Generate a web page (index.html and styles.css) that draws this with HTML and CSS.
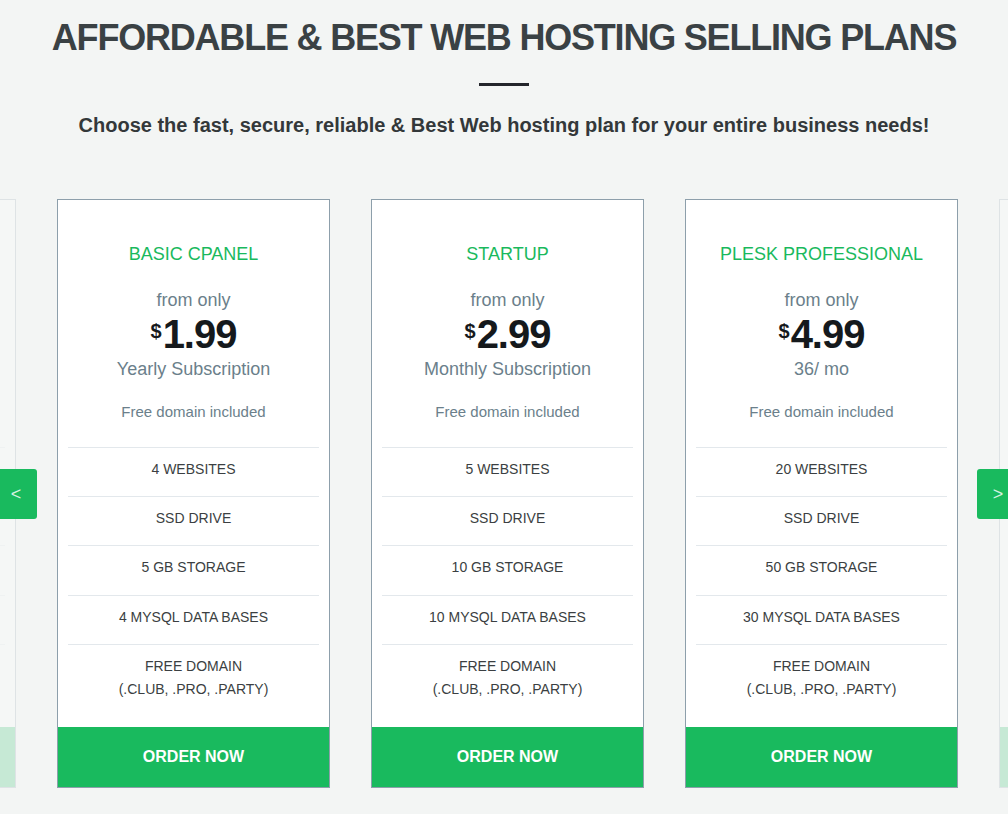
FILE: index.html
```html
<!DOCTYPE html>
<html lang="en">
<head>
<meta charset="utf-8">
<title>Hosting Plans</title>
<link rel="stylesheet" href="styles.css">
</head>
<body>
<section class="plans">
  <h1 class="plans-title">AFFORDABLE &amp; BEST WEB HOSTING SELLING PLANS</h1>
  <div class="plans-divider"></div>
  <p class="plans-subtitle">Choose the fast, secure, reliable &amp; Best Web hosting plan for your entire business needs!</p>

  <div class="carousel">
    <div class="track">
      <div class="card card-faded">
        <h3 class="card-name">PLESK PROFESSIONAL</h3>
        <div class="card-from">from only</div>
        <div class="card-price"><span class="cur">$</span>4.99</div>
        <div class="card-period">36/ mo</div>
        <div class="card-note">Free domain included</div>
        <ul class="features">
          <li>20 WEBSITES</li>
          <li>SSD DRIVE</li>
          <li>50 GB STORAGE</li>
          <li>30 MYSQL DATA BASES</li>
          <li>FREE DOMAIN<br>(.CLUB, .PRO, .PARTY)</li>
        </ul>
        <a class="order" href="#">ORDER NOW</a>
      </div>

      <div class="card">
        <h3 class="card-name">BASIC CPANEL</h3>
        <div class="card-from">from only</div>
        <div class="card-price"><span class="cur">$</span>1.99</div>
        <div class="card-period">Yearly Subscription</div>
        <div class="card-note">Free domain included</div>
        <ul class="features">
          <li>4 WEBSITES</li>
          <li>SSD DRIVE</li>
          <li>5 GB STORAGE</li>
          <li>4 MYSQL DATA BASES</li>
          <li>FREE DOMAIN<br>(.CLUB, .PRO, .PARTY)</li>
        </ul>
        <a class="order" href="#">ORDER NOW</a>
      </div>

      <div class="card">
        <h3 class="card-name">STARTUP</h3>
        <div class="card-from">from only</div>
        <div class="card-price"><span class="cur">$</span>2.99</div>
        <div class="card-period">Monthly Subscription</div>
        <div class="card-note">Free domain included</div>
        <ul class="features">
          <li>5 WEBSITES</li>
          <li>SSD DRIVE</li>
          <li>10 GB STORAGE</li>
          <li>10 MYSQL DATA BASES</li>
          <li>FREE DOMAIN<br>(.CLUB, .PRO, .PARTY)</li>
        </ul>
        <a class="order" href="#">ORDER NOW</a>
      </div>

      <div class="card">
        <h3 class="card-name">PLESK PROFESSIONAL</h3>
        <div class="card-from">from only</div>
        <div class="card-price"><span class="cur">$</span>4.99</div>
        <div class="card-period">36/ mo</div>
        <div class="card-note">Free domain included</div>
        <ul class="features">
          <li>20 WEBSITES</li>
          <li>SSD DRIVE</li>
          <li>50 GB STORAGE</li>
          <li>30 MYSQL DATA BASES</li>
          <li>FREE DOMAIN<br>(.CLUB, .PRO, .PARTY)</li>
        </ul>
        <a class="order" href="#">ORDER NOW</a>
      </div>

      <div class="card card-faded">
        <h3 class="card-name">BASIC CPANEL</h3>
        <div class="card-from">from only</div>
        <div class="card-price"><span class="cur">$</span>1.99</div>
        <div class="card-period">Yearly Subscription</div>
        <div class="card-note">Free domain included</div>
        <ul class="features">
          <li>4 WEBSITES</li>
          <li>SSD DRIVE</li>
          <li>5 GB STORAGE</li>
          <li>4 MYSQL DATA BASES</li>
          <li>FREE DOMAIN<br>(.CLUB, .PRO, .PARTY)</li>
        </ul>
        <a class="order" href="#">ORDER NOW</a>
      </div>
    </div>

    <button class="nav nav-prev" type="button">&lt;</button>
    <button class="nav nav-next" type="button">&gt;</button>
  </div>
</section>
</body>
</html>
```

FILE: styles.css
```css
* { box-sizing: border-box; }

html, body {
  margin: 0;
  padding: 0;
  background: #f3f5f4;
  font-family: "Liberation Sans", Arial, sans-serif;
}

.plans {
  padding-top: 18px;
  overflow: hidden;
  height: 814px;
}

.plans-title {
  margin: 0;
  text-align: center;
  font-size: 36px;
  line-height: 40px;
  font-weight: 700;
  letter-spacing: -1.2px;
  color: #3a4144;
}

.plans-divider {
  width: 50px;
  height: 3px;
  margin: 25px auto 0;
  background: #23252b;
}

.plans-subtitle {
  margin: 27px 0 0;
  text-align: center;
  font-size: 20px;
  line-height: 24px;
  font-weight: 700;
  color: #33383a;
}

.carousel {
  position: relative;
  margin-top: 62px;
  width: 1008px;
  overflow: hidden;
}

.track {
  display: flex;
  gap: 41px;
  margin-left: -257px;
}

.card {
  flex: 0 0 273px;
  width: 273px;
  background: #fff;
  border: 1px solid #8d9fab;
  text-align: center;
  display: flex;
  flex-direction: column;
}

.card-faded { opacity: 0.2; }

.card-name {
  margin: 43px 0 0;
  font-size: 18px;
  line-height: 22px;
  font-weight: 400;
  color: #19b95d;
}

.card-from {
  margin-top: 24px;
  font-size: 18px;
  line-height: 22px;
  color: #6b7f8b;
}

.card-price {
  margin-top: 1px;
  font-size: 40px;
  line-height: 44px;
  font-weight: 700;
  letter-spacing: -1px;
  color: #15191c;
}

.card-price .cur {
  font-size: 20px;
  line-height: 0;
  letter-spacing: 0;
  vertical-align: 10px;
  margin-right: 1px;
}

.card-period {
  margin-top: 2px;
  font-size: 18px;
  line-height: 22px;
  color: #6b7f8b;
}

.card-note {
  margin-top: 22px;
  font-size: 15px;
  line-height: 20px;
  color: #6b7f8b;
}

.features {
  list-style: none;
  margin: 25px 10px 0;
  padding: 0 0 11px;
}

.features li {
  border-top: 1px solid #e3e8ec;
  padding: 10px 0 15px;
  font-size: 14px;
  line-height: 23px;
  color: #3b3f42;
}

.features li:nth-child(3) {
  padding-bottom: 16px;
}

.order {
  display: block;
  height: 60px;
  line-height: 60px;
  background: #19ba5e;
  color: #fff;
  font-size: 16px;
  font-weight: 700;
  text-decoration: none;
}

.nav {
  position: absolute;
  top: 270px;
  width: 42px;
  height: 50px;
  border: 0;
  border-radius: 3px;
  background: #19ba5e;
  color: #d6f2e1;
  font-family: "Liberation Sans", Arial, sans-serif;
  font-size: 18px;
  line-height: 50px;
  padding: 0;
  text-align: center;
  cursor: pointer;
}

.nav-prev { left: -5px; }
.nav-next { left: 977px; }
```
